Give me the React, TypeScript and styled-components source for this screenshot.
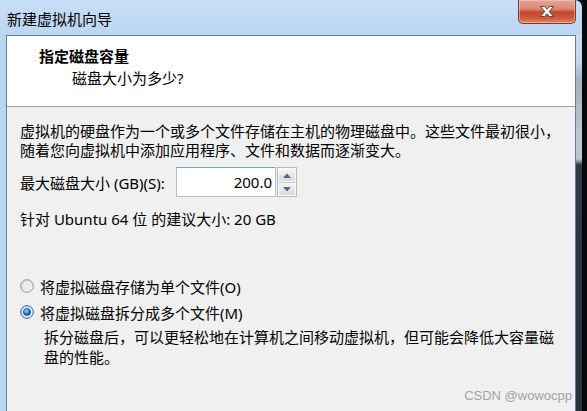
import styled, { createGlobalStyle } from 'styled-components';

const GlobalStyle = createGlobalStyle`
  html, body {
    margin: 0;
    padding: 0;
    overflow: hidden;
  }
  body {
    font-family: "Noto Sans", "Noto Sans CJK SC", sans-serif;
    font-size: 15px;
    color: #000;
  }
`;

const Screen = styled.div`
  display: flex;
  width: 587px;
  height: 411px;
  background: #050808;
`;

const Window = styled.div`
  width: 582px;
  display: flex;
  flex-direction: column;
  background: linear-gradient(180deg, #c6def6 0%, #bcd6f1 35px, #b9d5f3 100%);
  border-top-right-radius: 7px;
`;

const TitleBar = styled.div`
  height: 35px;
  display: flex;
  justify-content: space-between;
  align-items: flex-start;
  padding-left: 7px;
`;

const Title = styled.div`
  line-height: 20px;
  padding-top: 9px;
  white-space: nowrap;
`;

const CloseButton = styled.div`
  width: 56px;
  height: 23px;
  margin-right: 6px;
  display: flex;
  align-items: center;
  justify-content: center;
  border: 1px solid #7a3b30;
  border-top: none;
  border-radius: 0 0 5px 5px;
  background: linear-gradient(
    180deg,
    #e6a596 0%,
    #da8572 40%,
    #c6452e 52%,
    #cf5a3f 80%,
    #e28a68 100%
  );
  box-shadow: inset 0 0 0 1px rgba(255, 220, 210, 0.45);
`;

const Frame = styled.div`
  flex: 1;
  display: flex;
  min-height: 0;
`;

const LeftEdge = styled.div`
  width: 6px;
  background: #b8d6f4;
`;

const RightEdge = styled.div`
  width: 6px;
  background: linear-gradient(
    180deg,
    #c8def5 0px,
    #bfd6ee 28px,
    #a4b2bc 45px,
    #c2cbd0 110px,
    #bcc5ca 124px,
    #2b3a45 130px,
    #26333d 100%
  );
`;

const Client = styled.div`
  position: relative;
  flex: 1;
  display: flex;
  flex-direction: column;
  border: 1px solid #6e7e8e;
  border-bottom: none;
  background: #f0f0f0;
`;

const Header = styled.div`
  height: 71px;
  box-sizing: border-box;
  background: #fff;
  border-bottom: 1px solid #a0a0a0;
  padding: 10px 0 0 32px;
`;

const HeaderTitle = styled.div`
  font-weight: bold;
  line-height: 20px;
`;

const HeaderSub = styled.div`
  line-height: 20px;
  margin-top: 2px;
  padding-left: 33px;
`;

const Body = styled.div`
  flex: 1;
  display: flex;
  flex-direction: column;
  padding: 15px 0 0 13px;
`;

const Paragraph = styled.div`
  line-height: 19px;
  white-space: nowrap;
`;

const SizeRow = styled.div`
  display: flex;
  align-items: center;
  height: 30px;
  margin-top: 7px;
`;

const Label = styled.div`
  white-space: nowrap;
  width: 156px;
`;

const NumberBox = styled.div`
  width: 100px;
  height: 30px;
  box-sizing: border-box;
  background: #fff;
  border: 1px solid #aac4dc;
  border-top-color: #7f9fbf;
  display: flex;
  align-items: center;
  justify-content: flex-end;
  padding-right: 3px;
`;

const Spinner = styled.div`
  width: 20px;
  height: 30px;
  box-sizing: border-box;
  margin-left: 1px;
  border: 1px solid #b8b8b8;
  display: flex;
  flex-direction: column;
`;

const SpinButton = styled.div`
  flex: 1;
  display: flex;
  align-items: center;
  justify-content: center;
  background: linear-gradient(180deg, #f6f6f6 0%, #e8e8e8 50%, #dadada 100%);
  border: 1px solid #fafafa;
  & + & {
    border-top: 1px solid #c4c4c4;
  }
`;

const Hint = styled.div`
  line-height: 20px;
  margin-top: 12px;
  white-space: nowrap;
`;

const RadioRow = styled.div<{ $first?: boolean }>`
  display: flex;
  align-items: center;
  gap: 6px;
  height: 20px;
  margin-top: ${p => (p.$first ? '47px' : '6px')};
  white-space: nowrap;
`;

const Description = styled.div`
  line-height: 20px;
  margin-top: 5px;
  padding-left: 24px;
  white-space: nowrap;
`;

const Watermark = styled.div`
  position: absolute;
  right: 3px;
  bottom: 8px;
  font-family: "Liberation Sans", Arial, sans-serif;
  font-size: 13px;
  color: #a3a3a3;
`;

const CloseGlyph = () => (
  <svg width="16" height="13" viewBox="0 0 16 13">
    <path
      d="M1.5 1.5 H5.6 L8 4.3 L10.4 1.5 H14.5 L10.1 6.5 L14.5 11.5 H10.4 L8 8.7 L5.6 11.5 H1.5 L5.9 6.5 Z"
      fill="#fff"
      stroke="#5a4a48"
      strokeWidth="1"
      strokeLinejoin="round"
    />
  </svg>
);

const Arrow = ({ up }: { up?: boolean }) => (
  <svg width="8" height="5" viewBox="0 0 8 5">
    <path d={up ? 'M0 5 L4 0.5 L8 5 Z' : 'M0 0 L4 4.5 L8 0 Z'} fill="#4e6890" />
  </svg>
);

const Radio = ({ checked }: { checked?: boolean }) => (
  <svg width="14" height="14" viewBox="0 0 14 14">
    <defs>
      <linearGradient id="rOff" x1="0" y1="0" x2="1" y2="1">
        <stop offset="0" stopColor="#d4d4d4" />
        <stop offset="1" stopColor="#fbfbfb" />
      </linearGradient>
      <linearGradient id="rOn" x1="0" y1="0" x2="1" y2="1">
        <stop offset="0" stopColor="#cfe4f6" />
        <stop offset="1" stopColor="#f4f9fd" />
      </linearGradient>
      <radialGradient id="dot" cx="0.4" cy="0.35" r="0.7">
        <stop offset="0" stopColor="#9fdcff" />
        <stop offset="0.5" stopColor="#2f86d8" />
        <stop offset="1" stopColor="#0b3f86" />
      </radialGradient>
    </defs>
    <circle
      cx="7"
      cy="7"
      r="6.3"
      fill={checked ? 'url(#rOn)' : 'url(#rOff)'}
      stroke={checked ? '#2b5f8e' : '#909090'}
      strokeWidth="1"
    />
    {checked ? (
      <circle cx="7" cy="7" r="3.6" fill="url(#dot)" stroke="#0d3b73" strokeWidth="0.6" />
    ) : (
      <circle cx="7" cy="7" r="4.2" fill="#ececec" />
    )}
  </svg>
);

const App = () => {
  return (
    <>
      <GlobalStyle />
      <Screen>
        <Window>
          <TitleBar>
            <Title>新建虚拟机向导</Title>
            <CloseButton>
              <CloseGlyph />
            </CloseButton>
          </TitleBar>
          <Frame>
            <LeftEdge />
            <Client>
              <Header>
                <HeaderTitle>指定磁盘容量</HeaderTitle>
                <HeaderSub>磁盘大小为多少?</HeaderSub>
              </Header>
              <Body>
                <Paragraph>
                  虚拟机的硬盘作为一个或多个文件存储在主机的物理磁盘中。这些文件最初很小，
                  <br />
                  随着您向虚拟机中添加应用程序、文件和数据而逐渐变大。
                </Paragraph>
                <SizeRow>
                  <Label>最大磁盘大小 (GB)(S):</Label>
                  <NumberBox>200.0</NumberBox>
                  <Spinner>
                    <SpinButton>
                      <Arrow up />
                    </SpinButton>
                    <SpinButton>
                      <Arrow />
                    </SpinButton>
                  </Spinner>
                </SizeRow>
                <Hint>针对 Ubuntu 64 位 的建议大小: 20 GB</Hint>
                <RadioRow $first>
                  <Radio />
                  将虚拟磁盘存储为单个文件(O)
                </RadioRow>
                <RadioRow>
                  <Radio checked />
                  将虚拟磁盘拆分成多个文件(M)
                </RadioRow>
                <Description>
                  拆分磁盘后，可以更轻松地在计算机之间移动虚拟机，但可能会降低大容量磁
                  <br />
                  盘的性能。
                </Description>
              </Body>
              <Watermark>CSDN @wowocpp</Watermark>
            </Client>
            <RightEdge />
          </Frame>
        </Window>
      </Screen>
    </>
  );
};

export default App;
